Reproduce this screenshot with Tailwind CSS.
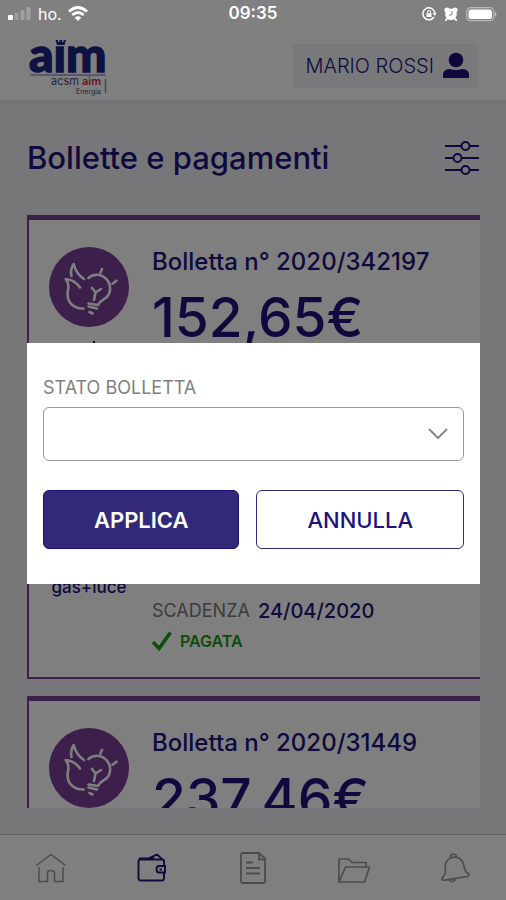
<!DOCTYPE html>
<html lang="it">
<head>
<meta charset="utf-8">
<meta name="viewport" content="width=device-width, initial-scale=1">
<title>Bollette e pagamenti</title>
<script src="https://cdn.jsdelivr.net/npm/@tailwindcss/browser@4"></script>
</head>
<body class="relative flex h-screen flex-col overflow-hidden bg-[#eeeef2] font-['Inter','Liberation_Sans',sans-serif] text-[#21137c]">
<svg class="hidden" aria-hidden="true">
  <symbol id="gas-luce" viewBox="0 0 80 80">
    <g fill="none" stroke="#fff" stroke-width="2.6" stroke-linecap="round" stroke-linejoin="round">
      <path d="M35 32Q27 27 24.700 17Q21 22 22.500 29M31 40.500Q26 33 16.700 32Q20.500 37 19 43C17 53 22 61.500 34.500 61.500"/>
      <path d="M39.500 31C43 27.500 50 26.500 55 30C61 34 62.500 41 60 47C57.500 53 51 52.500 49 58L39.500 56.500M43 41 46.500 45.500 52 42M46.500 45.500 45 53M39.500 59.500 48 61.500M40.500 65 43.500 66.500M51.500 25.500 53 22M63.500 36.700 67.500 33.700"/>
    </g>
  </symbol>
</svg>

<div class="relative z-20 grid h-7 shrink-0 grid-cols-3 items-center px-2 text-white">
  <div class="flex items-center gap-1.5">
    <svg class="h-4 w-6" viewBox="0 0 24 16" fill="#fff" aria-hidden="true"><rect x="0" y="9" width="5" height="5" rx="1"/><g opacity=".25"><rect x="6.500" y="7" width="4" height="7" rx="1"/><rect x="12.500" y="4" width="4" height="10" rx="1"/><rect x="18.500" y="1" width="4" height="13" rx="1"/></g></svg>
    <span class="text-base">ho.</span>
    <svg class="h-4 w-5" viewBox="0 0 20 16" fill="none" stroke="#fff" stroke-width="2.700" aria-hidden="true"><path d="M1 5.500Q10-2.500 19 5.500M4.300 9Q10 4 15.700 9"/><path d="M10 15 6.800 11.700Q10 9 13.200 11.700Z" fill="#fff" stroke="none"/></svg>
  </div>
  <time class="text-center text-[17px] font-semibold">09:35</time>
  <div class="flex items-center justify-end gap-2">
    <svg class="size-3.5" viewBox="0 0 14 14" fill="none" stroke="#fff" stroke-width="1.500" aria-hidden="true"><path d="M12 10A6 6 0 1 1 12.800 5.500"/><path d="M14.500 5.500 13 9 10.500 6Z" fill="#fff" stroke="none"/><rect x="4.500" y="6.300" width="5" height="3.700" fill="#fff" stroke="none"/><path d="M5.500 6.500V5A1.500 1.500 0 0 1 8.500 5V6.500" stroke-width="1"/></svg>
    <svg class="size-3.5" viewBox="0 0 14 14" aria-hidden="true"><g fill="#fff"><circle cx="3" cy="3" r="2.600"/><circle cx="11" cy="3" r="2.600"/><circle cx="7" cy="7.300" r="5.800"/></g><path d="M2.800 12 1.800 13.300M11.200 12 12.200 13.300" stroke="#fff" stroke-width="1.800" stroke-linecap="round"/><path d="M8 4V7.700L5 8.300" fill="none" stroke="#808080"/></svg>
    <svg class="h-4 w-8" viewBox="0 0 32 16" aria-hidden="true"><rect x=".7" y="1.700" width="27" height="13" rx="4" fill="none" stroke="#fff" stroke-opacity=".45" stroke-width="1.200"/><rect x="2.500" y="3.500" width="23.500" height="9.500" rx="2.500" fill="#fff"/><path d="M29 5.500Q32 8 29 11Z" fill="#fff" fill-opacity=".5"/></svg>
  </div>
  <div class="absolute inset-0 -z-10 bg-[#808080]"></div>
</div>

<header class="flex h-[74px] shrink-0 items-start justify-between border-b-2 border-[#e6e6ea] bg-white px-7 pt-3">
  <svg class="h-14 w-20 overflow-visible" viewBox="0 0 80 56" role="img" aria-label="aim acsm aim Energia">
    <text x="1" y="32" font-family="Lato" font-weight="900" font-size="48" fill="#1b2580" stroke="#1b2580" stroke-width="1.400">aım</text>
    <path d="M27.500 0H30V2H31.500V0H34V2H35.500V0H38L36.500 5H29Z" fill="#1b2580"/>
    <path d="M2 35H78" stroke="#6068a8"/>
    <text x="23" y="45" font-family="Inter" font-size="11" fill="#4a4a82">acsm</text>
    <text x="54" y="45" font-family="Inter" font-size="11" font-weight="600" fill="#d22a3c">aim</text>
    <text x="48" y="54" font-family="Inter" font-size="7" fill="#44466a">Energia</text>
    <path d="M77.500 39V53" stroke="#55a8c0" stroke-width="1.500"/>
  </svg>
  <button type="button" class="mt-1 flex h-11 items-center gap-2 bg-[#f3f3f6] pr-2 pl-3 text-[20px] font-light">
    MARIO ROSSI
    <svg class="h-7 w-7" viewBox="0 0 28 28" fill="#1c0f72" aria-hidden="true"><circle cx="14" cy="8" r="7.300"/><path d="M1 26V23.500Q1 17 7.500 17Q14 19 20.500 17Q27 17 27 23.500V26Z"/></svg>
  </button>
</header>

<main class="flex min-h-0 flex-1 flex-col px-[26px] pb-[26px] pl-[27px]">
  <div class="flex h-[113px] shrink-0 items-center justify-between">
    <h1 class="text-[31px] font-medium">Bollette e pagamenti</h1>
    <button type="button" aria-label="Filtri">
      <svg class="h-9 w-9" viewBox="0 0 36 36" fill="none" stroke="#21137c" stroke-width="2" aria-hidden="true"><path d="M1 5H17M26 5H35M1 17H9M18 17H35M1 29H17M26 29H35"/><circle cx="21.500" cy="5" r="4"/><circle cx="13.500" cy="17" r="4"/><circle cx="21.500" cy="29" r="4"/></svg>
    </button>
  </div>
  <div class="flex min-h-0 flex-1 flex-col gap-[17px] overflow-hidden">
    <article class="flex h-[464px] shrink-0 gap-[23px] border-t-[5px] border-b-2 border-l-2 border-[#7b3f98] bg-white pt-[27px] pl-5">
      <div class="flex w-20 flex-col items-center">
        <div class="grid size-20 shrink-0 place-items-center rounded-full bg-[#7b3f98]"><svg class="size-20" aria-hidden="true"><use href="#gas-luce"/></svg></div>
        <div class="mt-3.5 ml-2.5 h-[234px] w-0.5 bg-[#21137c]"></div>
        <span class="text-[17px] font-medium whitespace-nowrap">gas+luce</span>
      </div>
      <div class="flex flex-col">
        <h2 class="text-[24px] leading-[30px] font-medium">Bolletta n° 2020/342197</h2>
        <p class="mt-2.5 text-[55px] leading-[60px] font-medium">152,65€</p>
        <p class="mt-[250px] flex items-center gap-2 text-[20px] leading-7 font-medium"><span class="text-[18px] font-normal text-[#777]">SCADENZA</span>24/04/2020</p>
        <p class="flex h-8 items-center gap-2 text-[16px] font-semibold text-[#1a9c0c]"><svg class="h-5 w-5" viewBox="0 0 20 20" aria-hidden="true"><path d="M1 11 7 17.500 18.500 1.500" fill="none" stroke="#1a9c0c" stroke-width="3.500"/></svg>PAGATA</p>
      </div>
    </article>
    <article class="flex h-[464px] shrink-0 gap-[23px] border-t-[5px] border-b-2 border-l-2 border-[#7b3f98] bg-white pt-[27px] pl-5">
      <div class="w-20">
        <div class="grid size-20 place-items-center rounded-full bg-[#7b3f98]"><svg class="size-20" aria-hidden="true"><use href="#gas-luce"/></svg></div>
      </div>
      <div class="flex flex-col">
        <h2 class="text-[24px] leading-[30px] font-medium">Bolletta n° 2020/31449</h2>
        <p class="mt-2.5 text-[55px] leading-[60px] font-medium">237,46€</p>
      </div>
    </article>
  </div>
</main>

<nav class="grid h-[66px] shrink-0 grid-cols-5 place-items-center border-t border-[#bbb] bg-white text-[#999]" aria-label="Principale">
  <a href="#" aria-label="Home"><svg class="size-8" viewBox="0 0 32 32" fill="none" stroke="currentColor" stroke-width="1.500"><path d="M1.500 13.500 16 2.500 30.500 13.500M4 15V29.500H12.500V21Q12.500 18.500 16 18.500Q19.500 18.500 19.500 21V29.500H28V15"/></svg></a>
  <a href="#" aria-label="Pagamenti" class="text-[#21137c]"><svg class="size-8" viewBox="0 0 32 32" fill="none" stroke="currentColor" stroke-width="1.900"><path d="M28 14V9Q28 7.500 26 7.500H4Q2.500 7.500 2.500 9V26Q2.500 28.500 5 28.500H26Q28 28.500 28 26V21"/><path d="M3 6.500H12L21 2.500 26 7M14 7.500 18 5"/><path d="M29 14H23Q20.500 14 20.500 17.500Q20.500 20.500 23 20.500H29ZM23.500 17.500H26"/></svg></a>
  <a href="#" aria-label="Documenti"><svg class="size-8" viewBox="0 0 32 32" fill="none" stroke="currentColor" stroke-width="1.800"><path d="M22 1H6Q4 1 4 3V29Q4 31 6 31H26Q28 31 28 29V6.500L22 1V7.500H28M9 10.500H16M9 16H23M9 21.500H23"/></svg></a>
  <a href="#" aria-label="Archivio"><svg class="size-8" viewBox="0 0 32 32" fill="none" stroke="currentColor" stroke-width="1.700"><path d="M1 30V7H10.500L14 10.500H28V15M1 30 7.500 15H31.500L26.500 30Z"/></svg></a>
  <a href="#" aria-label="Notifiche"><svg class="size-8" viewBox="0 0 32 32" fill="none" stroke="currentColor" stroke-width="1.700"><path d="M13 5.500C5.500 8 6 14 6.500 20C6.500 23 3.500 24 3 27Q3.500 28.500 6 28.200L28 24.500Q30.500 23.500 29.500 21.500C26 20 26 18 25 14C23.500 7 19 4 13 5.500ZM11.500 6Q11 2.500 14 2Q17 2 17.500 5M10 28Q13.500 31.500 17 27"/></svg></a>
</nav>

<div class="absolute inset-0 z-10 bg-black/50"></div>
<form role="dialog" aria-modal="true" aria-label="Filtra bollette" class="absolute top-[343px] right-[26px] left-[27px] z-30 flex flex-col bg-white px-4 pt-[33px] pb-[35px]">
  <label for="stato" class="text-[18px] leading-6 text-[#808080]">STATO BOLLETTA</label>
  <div class="relative mt-[7px]">
    <select id="stato" class="block h-[54px] w-full appearance-none rounded-md border border-[#999] bg-white px-4"><option value=""></option></select>
    <svg class="pointer-events-none absolute top-5 right-4 h-3.5 w-5" viewBox="0 0 20 14" fill="none" stroke="#888" stroke-width="2" aria-hidden="true"><path d="M1 2 10 11 19 2"/></svg>
  </div>
  <div class="mt-[29px] flex h-[59px] gap-[17px] text-[22px]">
    <button type="submit" class="flex-auto rounded-md border border-[#1c0f72] bg-[#32297a] pt-0.5 font-semibold text-white">APPLICA</button>
    <button type="button" class="flex-auto rounded-md border border-[#32297a] bg-white pt-0.5 font-medium text-[#21137c]">ANNULLA</button>
  </div>
</form>
</body>
</html>
